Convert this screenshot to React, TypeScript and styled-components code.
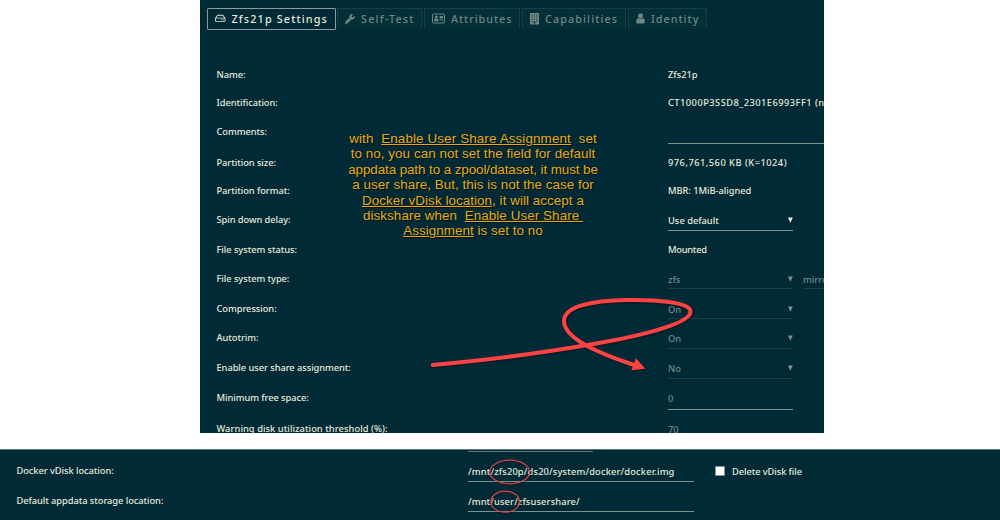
import React from "react";
import styled, { createGlobalStyle } from "styled-components";
import { FaWrench, FaRegHdd } from "react-icons/fa";

const Global = createGlobalStyle`
  * { box-sizing: border-box; }
  body { margin: 0; background: #fff; overflow: hidden; }
`;

const Page = styled.main`
  position: relative;
  width: 1000px;
  height: 520px;
  display: flex;
  flex-direction: column;
  gap: 16px;
  overflow: hidden;
  color: #e8e9dc;
  font-family: "Noto Sans", sans-serif;
  font-size: 9.3px;
  font-weight: 500;
  white-space: pre;
`;

const DiskPanel = styled.section`
  width: 624px;
  height: 433px;
  flex: none;
  margin-left: 200px;
  background: #002b36;
  overflow: hidden;
`;

const Tabs = styled.nav`
  display: flex;
  gap: 2px;
  padding: 8px 0 0 7px;
  height: 60px;
`;

const Tab = styled.button<{ $w: number; $active?: boolean }>`
  width: ${(p) => p.$w}px;
  height: ${(p) => (p.$active ? 22 : 21)}px;
  margin-right: ${(p) => (p.$active ? -1 : 0)}px;
  padding: 0 0 ${(p) => (p.$active ? 1 : 0)}px 7px;
  display: flex;
  align-items: center;
  gap: 6px;
  border: 1px solid ${(p) => (p.$active ? "#8e9c99" : "#173d45")};
  border-bottom-color: ${(p) => (p.$active ? "#8e9c99" : "transparent")};
  border-radius: ${(p) => (p.$active ? 1 : 0)}px;
  background: ${(p) => (p.$active ? "#002b36" : "#032f39")};
  color: ${(p) => (p.$active ? "#e8e9dc" : "#6f8683")};
  font: 500 10.8px "Noto Sans", sans-serif;
  white-space: pre;
  svg { flex: none; }
`;

const Text = styled.span<{ $ls?: number }>`
  letter-spacing: ${(p) => p.$ls ?? 0}px;
`;

const Row = styled.div<{ $h: number }>`
  display: grid;
  grid-template-columns: 451.5px auto;
  align-items: center;
  height: ${(p) => p.$h}px;
  padding-left: 16.5px;
  > ${Text}, > div > ${Text} { padding-bottom: 1px; }
`;

const Value = styled.div`
  display: flex;
  align-items: center;
  gap: 10px;
`;

const Field = styled.div<{ $h: number; $w?: number; $tone?: "off" | "dim" }>`
  flex: none;
  width: ${(p) => p.$w ?? 125}px;
  height: ${(p) => p.$h}px;
  padding-top: 1px;
  display: flex;
  align-items: center;
  justify-content: space-between;
  border-bottom: 1px solid ${(p) => (p.$tone === "off" ? "#1b424a" : "#7f908f")};
  color: ${(p) => (p.$tone ? "#73898a" : "#e8e9dc")};
`;

const Caret = styled.svg<{ $off?: boolean }>`
  width: 5px;
  height: 6px;
  fill: ${(p) => (p.$off ? "#84918f" : "#f2f2e8")};
`;

const DockerPanel = styled.section`
  width: 1000px;
  height: 71px;
  flex: none;
  background: #002b36;
  border-top: 1px solid #5c777c;
`;

const PreviousLine = styled.div`
  width: 125px;
  height: 2px;
  margin-left: 468px;
  border-bottom: 1px solid #62797c;
`;

const CheckLabel = styled.label`
  display: flex;
  align-items: center;
  gap: 8px;
  margin-left: 11px;
`;

const Box = styled.span`
  width: 10px;
  height: 10px;
  margin-right: -1px;
  border: 1px solid #8d8f96;
  border-radius: 1px;
  background: #fff;
`;

const Note = styled.p`
  position: absolute;
  left: 323px;
  top: 131px;
  width: 300px;
  margin: 0;
  color: #eaa914;
  text-align: center;
  font: 13.4px/15.4px "Liberation Sans", sans-serif;
  text-shadow: 1px 1px 1px rgba(0, 0, 0, 0.6);
  u { text-underline-offset: 1px; text-decoration-thickness: 1px; }
`;

const Overlay = styled.svg`
  position: absolute;
  left: 0;
  top: 0;
  filter: drop-shadow(1px 1px 1px rgba(0, 0, 0, 0.45));
`;

const CardIcon = () => (
  <svg width="13" height="11" viewBox="0 0 13 11" fill="currentColor">
    <rect x=".5" y="1" width="12" height="9" rx="1" fill="none" stroke="currentColor" />
    <circle cx="4.3" cy="4" r="1.5" />
    <path d="M2 8.300V6.800Q2.400 5.400 4.300 5.400T6.600 6.800V8.300zM7.500 3h3.700v2.500H7.500zM7.500 6.500h3.700v1H7.500z" />
  </svg>
);

const BuildingIcon = () => (
  <svg width="9" height="12" viewBox="0 0 9 12" fill="currentColor" fillRule="evenodd">
    <path d="M0 0h9v11.500H0zM1.700 1.500v1h1v-1zM4 1.500v1h1v-1zM6.300 1.500v1h1v-1zM1.700 3.700v1h1v-1zM4 3.700v1h1v-1zM6.300 3.700v1h1v-1zM1.700 5.900v1h1v-1zM4 5.900v1h1v-1zM6.300 5.900v1h1v-1zM1.700 8.100v1h1v-1zM6.300 8.100v1h1v-1zM3.600 8.500v2h1.800v-2z" />
  </svg>
);

const UserIcon = () => (
  <svg width="9" height="11" viewBox="0 0 9 11" fill="currentColor">
    <ellipse cx="4.500" cy="3" rx="2.400" ry="2.800" />
    <path d="M.2 9Q.2 5.500 2.200 5.200Q4.500 7 6.800 5.200Q8.800 5.500 8.800 9Q8.800 10.500 7.500 10.500H1.500Q.2 10.500 .2 9z" />
  </svg>
);

type SelectProps = { h: number; value: string; off?: boolean };
const Select = ({ h, value, off }: SelectProps) => (
  <Field $h={h} $tone={off ? "off" : undefined}>
    <Text>{value}</Text>
    <Caret $off={off} viewBox="0 0 5 6"><path d="M0 .5h4.800L2.400 5.700z" /></Caret>
  </Field>
);

type SettingProps = { h: number; label: string; ls?: number; children: React.ReactNode };
const Setting = ({ h, label, ls = -0.06, children }: SettingProps) => (
  <Row $h={h}>
    <Text $ls={ls}>{label}</Text>
    <Value>{children}</Value>
  </Row>
);

export default function App() {
  return (
    <Page>
      <Global />
      <DiskPanel>
        <Tabs>
          <Tab $w={129} $active><FaRegHdd size={10.5} /><Text $ls={1.15}>Zfs21p Settings</Text></Tab>
          <Tab $w={85}><FaWrench size={10} /><Text $ls={1.2}>Self-Test</Text></Tab>
          <Tab $w={96}><CardIcon /><Text $ls={0.95}>Attributes</Text></Tab>
          <Tab $w={104}><BuildingIcon /><Text $ls={1.1}>Capabilities</Text></Tab>
          <Tab $w={79}><UserIcon /><Text $ls={1}>Identity</Text></Tab>
        </Tabs>
        <Setting h={30} label="Name:"><Text>Zfs21p</Text></Setting>
        <Setting h={26} label="Identification:"><Text $ls={0.46}>CT1000P3SSD8_2301E6993FF1 (nvme0n1)</Text></Setting>
        <Setting h={32} label="Comments:"><Field $h={24} $w={180} /></Setting>
        <Setting h={30} label="Partition size:"><Text $ls={0.48}>976,761,560 KB (K=1024)</Text></Setting>
        <Setting h={26} label="Partition format:"><Text $ls={-0.04}>MBR: 1MiB-aligned</Text></Setting>
        <Setting h={32} label="Spin down delay:"><Select h={22} value="Use default" /></Setting>
        <Setting h={28} label="File system status:"><Text $ls={-0.25}>Mounted</Text></Setting>
        <Setting h={30} label="File system type:">
          <Select h={20} value="zfs" off />
          <Field $h={20} $tone="off"><Text>mirror</Text></Field>
        </Setting>
        <Setting h={30} label="Compression:"><Select h={20} value="On" off /></Setting>
        <Setting h={28} label="Autotrim:"><Select h={22} value="On" off /></Setting>
        <Setting h={32} label="Enable user share assignment:"><Select h={22} value="No" off /></Setting>
        <Setting h={28} label="Minimum free space:"><Field $h={24} $tone="dim"><Text>0</Text></Field></Setting>
        <Setting h={34} label="Warning disk utilization threshold (%):" ls={0.06}><Field $h={24} $tone="dim"><Text>70</Text></Field></Setting>
      </DiskPanel>
      <DockerPanel>
        <PreviousLine />
        <Setting h={38} label="Docker vDisk location:">
          <Field $h={22} $w={226}><Text $ls={0.16}>/mnt/zfs20p/ds20/system/docker/docker.img</Text></Field>
          <CheckLabel><Box /><Text $ls={-0.08}>Delete vDisk file</Text></CheckLabel>
        </Setting>
        <Setting h={22} label="Default appdata storage location:">
          <Field $h={22} $w={226}><Text $ls={0.13}>/mnt/user/zfsusershare/</Text></Field>
        </Setting>
      </DockerPanel>
      <Note>
        <Text $ls={0.13}>with  <u>Enable User Share Assignment</u>  set</Text>{"\n"}
        <Text $ls={0.06}>to no, you can not set the field for default</Text>{"\n"}
        <Text $ls={-0.08}>appdata path to a zpool/dataset, it must be</Text>{"\n"}
        <Text $ls={0.04}>a user share, But, this is not the case for</Text>{"\n"}
        <Text $ls={0.06}><u>Docker vDisk location</u>, it will accept a</Text>{"\n"}
        <Text $ls={0.08}>diskshare when  <u>Enable User Share </u></Text>{"\n"}
        <Text $ls={0.04}><u>Assignment</u> is set to no</Text>
      </Note>
      <Overlay width="1000" height="520" fill="none" stroke="#ff4242">
        <path strokeWidth="4" strokeLinecap="round" d="M432.700 365C540 355 690 333 690.500 311.700C690.500 302 655 299.500 627 300C590 300.500 564 307 564 321C564 341 610 357 634 365" />
        <path stroke="none" fill="#ff4242" d="M636 358.300L645.300 368.700L631.300 370.300z" />
        <ellipse cx="509.700" cy="472" rx="20" ry="11.800" stroke="#e0444a" strokeWidth="1.2" />
        <ellipse cx="505.200" cy="501.700" rx="14.300" ry="10.500" stroke="#e0444a" strokeWidth="1.2" />
      </Overlay>
    </Page>
  );
}
